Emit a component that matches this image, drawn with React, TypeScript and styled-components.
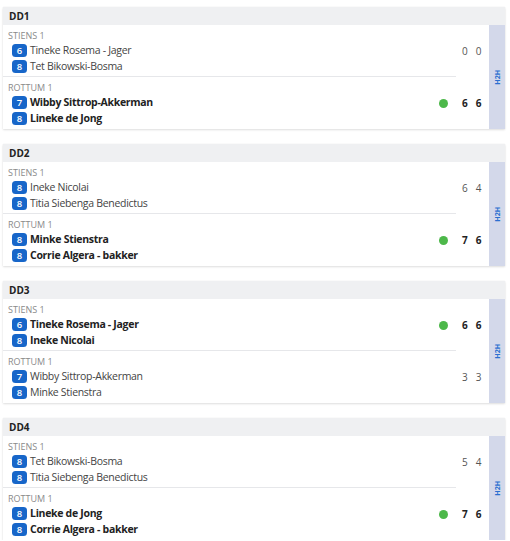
import React from "react";
import styled, { createGlobalStyle } from "styled-components";

const Global = createGlobalStyle`
  html, body { margin: 0; padding: 0; background: #ffffff; }
  body { font-family: "Open Sans", "Noto Sans", sans-serif; color: #222; }
`;

const Page = styled.div`
  display: flex;
  flex-direction: column;
  gap: 15px;
  padding: 7px 5px 0 3px;
`;

const Card = styled.div`
  display: flex;
  flex-direction: column;
  background: #fff;
  box-shadow: 0 1px 2px rgba(0, 0, 0, 0.12), 0 0 1px rgba(0, 0, 0, 0.08);
`;

const Header = styled.div`
  height: 18px;
  display: flex;
  align-items: center;
  padding-left: 6px;
  background: #eff0f2;
  font-size: 10px;
  font-weight: 700;
  color: #222;
`;

const Body = styled.div`
  display: flex;
`;

const Teams = styled.div`
  flex: 1;
  display: flex;
  flex-direction: column;
`;

const TeamRow = styled.div`
  display: flex;
  align-items: stretch;
`;

const TeamInfo = styled.div<{ $divider?: boolean }>`
  flex: 1;
  display: flex;
  align-items: center;
  padding: 4px 0 ${(p) => (p.$divider ? "2px" : "3px")} 5px;
  border-bottom: ${(p) => (p.$divider ? "1px solid #e6e7ea" : "none")};
`;

const Players = styled.div`
  flex: 1;
  display: flex;
  flex-direction: column;
`;

const Club = styled.div`
  font-size: 9px;
  line-height: 13px;
  color: #8a8a8a;
  text-transform: uppercase;
`;

const PlayerRow = styled.div<{ $win?: boolean }>`
  display: flex;
  align-items: center;
  gap: 3px;
  height: 16px;
  padding-left: 4px;
  font-size: 10.5px;
  letter-spacing: -0.3px;
  font-weight: ${(p) => (p.$win ? 700 : 400)};
  color: ${(p) => (p.$win ? "#222" : "#444")};
  white-space: nowrap;
`;

const Badge = styled.span`
  display: inline-flex;
  align-items: center;
  justify-content: center;
  width: 15px;
  height: 13px;
  border-radius: 3.5px;
  background: #1766c9;
  color: #fff;
  font-size: 9.5px;
  font-weight: 600;
  letter-spacing: 0;
`;

const Dot = styled.span`
  width: 9px;
  height: 9px;
  border-radius: 50%;
  background: #4db84a;
  margin-right: 8px;
`;

const Scores = styled.div<{ $win?: boolean }>`
  width: 33px;
  display: flex;
  align-items: center;
  gap: 8px;
  padding-left: 6px;
  box-sizing: border-box;
  font-size: 10px;
  font-weight: ${(p) => (p.$win ? 700 : 400)};
  color: ${(p) => (p.$win ? "#222" : "#555")};
`;

const H2H = styled.div`
  width: 16px;
  background: #d3d8ea;
  display: flex;
  align-items: center;
  justify-content: center;
`;

const H2HText = styled.span`
  writing-mode: vertical-rl;
  transform: rotate(180deg);
  font-size: 7px;
  font-weight: 700;
  color: #2a6fd0;
`;

type Player = { level: number; name: string };
type Team = { club: string; players: Player[]; scores: number[]; win: boolean };
type Match = { title: string; teams: [Team, Team] };

const matches: Match[] = [
  {
    title: "DD1",
    teams: [
      { club: "Stiens 1", players: [{ level: 6, name: "Tineke Rosema - Jager" }, { level: 8, name: "Tet Bikowski-Bosma" }], scores: [0, 0], win: false },
      { club: "Rottum 1", players: [{ level: 7, name: "Wibby Sittrop-Akkerman" }, { level: 8, name: "Lineke de Jong" }], scores: [6, 6], win: true },
    ],
  },
  {
    title: "DD2",
    teams: [
      { club: "Stiens 1", players: [{ level: 8, name: "Ineke Nicolai" }, { level: 8, name: "Titia Siebenga Benedictus" }], scores: [6, 4], win: false },
      { club: "Rottum 1", players: [{ level: 8, name: "Minke Stienstra" }, { level: 8, name: "Corrie Algera - bakker" }], scores: [7, 6], win: true },
    ],
  },
  {
    title: "DD3",
    teams: [
      { club: "Stiens 1", players: [{ level: 6, name: "Tineke Rosema - Jager" }, { level: 8, name: "Ineke Nicolai" }], scores: [6, 6], win: true },
      { club: "Rottum 1", players: [{ level: 7, name: "Wibby Sittrop-Akkerman" }, { level: 8, name: "Minke Stienstra" }], scores: [3, 3], win: false },
    ],
  },
  {
    title: "DD4",
    teams: [
      { club: "Stiens 1", players: [{ level: 8, name: "Tet Bikowski-Bosma" }, { level: 8, name: "Titia Siebenga Benedictus" }], scores: [5, 4], win: false },
      { club: "Rottum 1", players: [{ level: 8, name: "Lineke de Jong" }, { level: 8, name: "Corrie Algera - bakker" }], scores: [7, 6], win: true },
    ],
  },
];

const TeamBlock = ({ team, divider }: { team: Team; divider?: boolean }) => (
  <TeamRow>
    <TeamInfo $divider={divider}>
      <Players>
        <Club>{team.club}</Club>
        {team.players.map((p) => (
          <PlayerRow key={p.name} $win={team.win}>
            <Badge>{p.level}</Badge>
            {p.name}
          </PlayerRow>
        ))}
      </Players>
      {team.win && <Dot />}
    </TeamInfo>
    <Scores $win={team.win}>
      {team.scores.map((s, i) => (
        <span key={i}>{s}</span>
      ))}
    </Scores>
  </TeamRow>
);

export default function App() {
  return (
    <>
      <Global />
      <Page>
        {matches.map((m) => (
          <Card key={m.title}>
            <Header>{m.title}</Header>
            <Body>
              <Teams>
                <TeamBlock team={m.teams[0]} divider />
                <TeamBlock team={m.teams[1]} />
              </Teams>
              <H2H>
                <H2HText>H2H</H2HText>
              </H2H>
            </Body>
          </Card>
        ))}
      </Page>
    </>
  );
}
